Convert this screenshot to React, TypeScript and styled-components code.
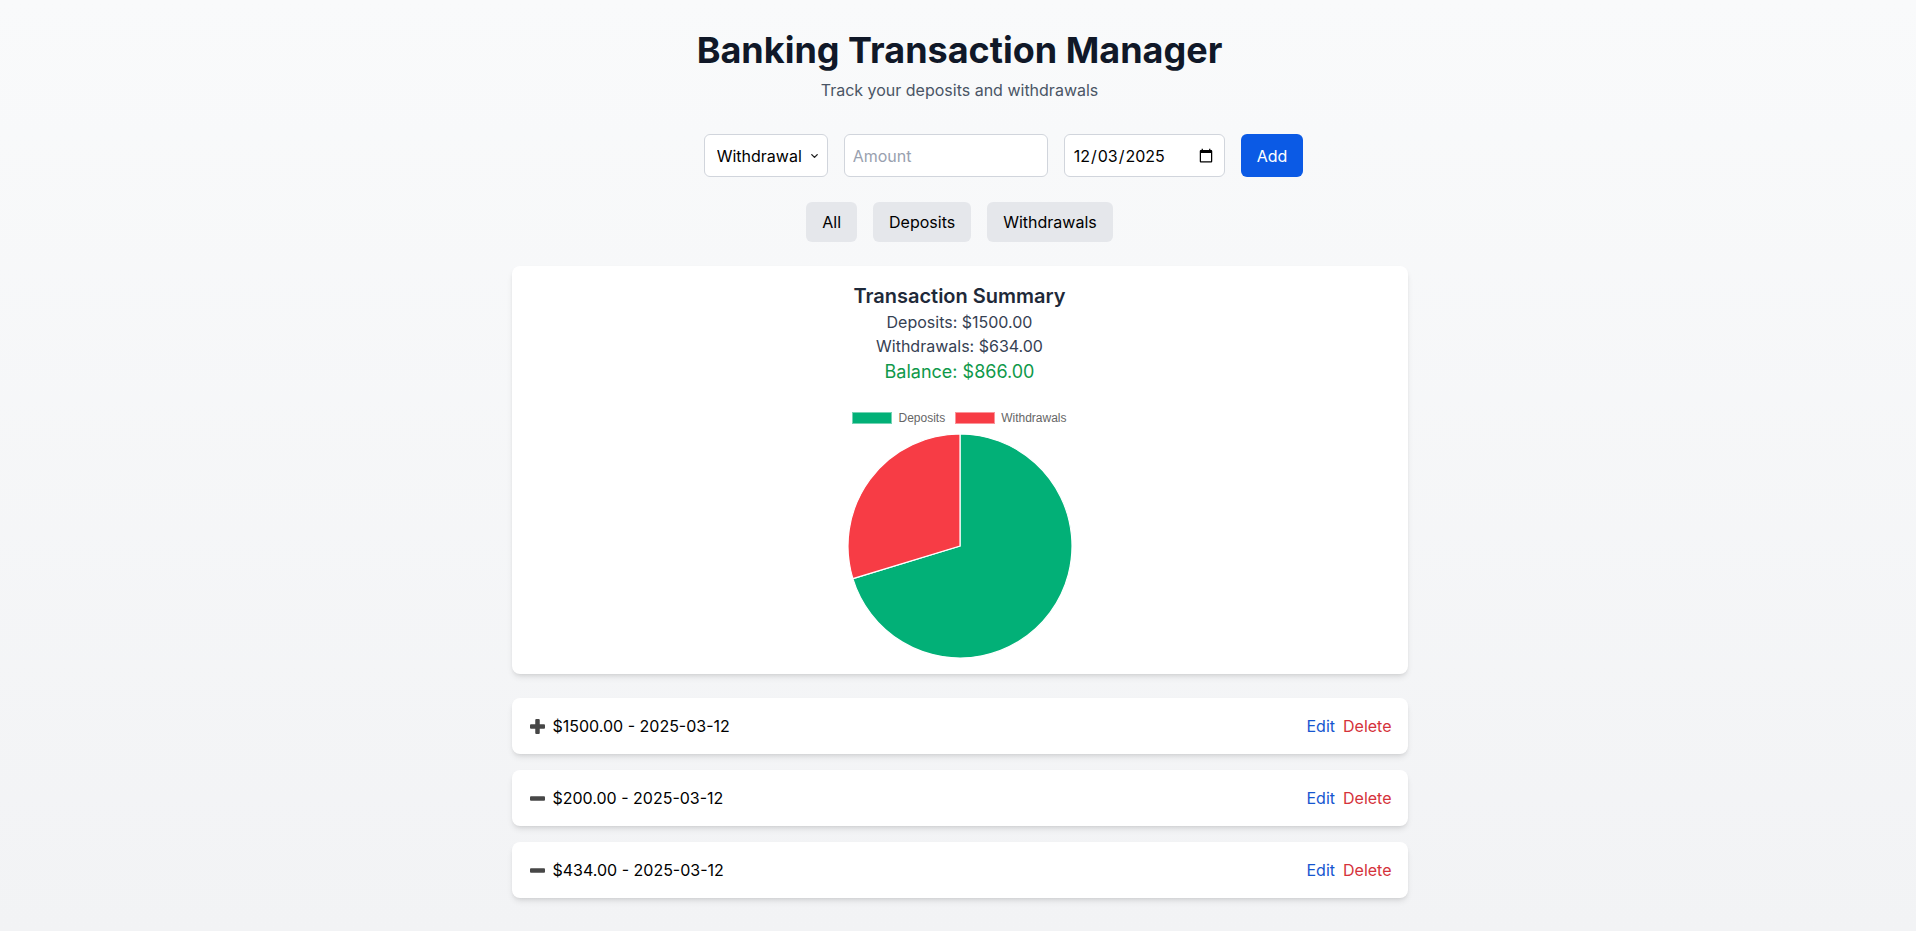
import React from "react";
import styled, { createGlobalStyle } from "styled-components";
import { ChevronDown } from "lucide-react";

const GlobalStyle = createGlobalStyle`
  html,
  body {
    margin: 0;
    padding: 0;
  }

  body {
    font-family: Inter, "Noto Sans", "Liberation Sans", sans-serif;
    color: #000;
  }

  * {
    box-sizing: border-box;
  }
`;

const Page = styled.div`
  min-height: 100vh;
  padding: 30px 16px 24px 19px;
  background: linear-gradient(to bottom, #f9fafb, #f2f3f5);
  display: flex;
  flex-direction: column;
  align-items: center;
`;

const Title = styled.h1`
  margin: 0;
  font-size: 36px;
  line-height: 40px;
  font-weight: 700;
  color: #101828;
`;

const Subtitle = styled.p`
  margin: 8px 0 0;
  font-size: 16px;
  line-height: 24px;
  color: #4a5565;
`;

const Form = styled.form`
  margin-top: 32px;
  display: flex;
  justify-content: center;
  gap: 16px;
  padding-left: 88px;
  height: 43px;
`;

const Field = styled.input<{ $width: number }>`
  width: ${(p) => p.$width}px;
  padding: 8px;
  border: 1px solid #d1d5dc;
  border-radius: 6px;
  background: #fff;
  font: inherit;
  font-size: 16px;
  color: #000;

  &::placeholder {
    color: #99a1af;
  }
`;

const SelectWrap = styled.div`
  position: relative;
  width: 124px;
  display: flex;
`;

const Select = styled.select`
  width: 100%;
  padding: 8px 24px 8px 12px;
  border: 1px solid #d1d5dc;
  border-radius: 6px;
  background: #fff;
  font: inherit;
  font-size: 16px;
  color: #000;
  appearance: none;
`;

const Caret = styled.span`
  position: absolute;
  right: 8px;
  top: 50%;
  transform: translateY(-50%);
  display: flex;
  pointer-events: none;
  color: #222;
`;

const Button = styled.button<{ $variant?: "primary" | "muted" }>`
  padding: 8px 16px;
  border: none;
  border-radius: 6px;
  font: inherit;
  font-size: 16px;
  line-height: 24px;
  cursor: pointer;
  background: ${(p) => (p.$variant === "primary" ? "#0b5ae5" : "#e5e7eb")};
  color: ${(p) => (p.$variant === "primary" ? "#fff" : "#000")};
`;

const Filters = styled.div`
  margin-top: 25px;
  display: flex;
  gap: 16px;
`;

const Card = styled.div`
  width: 896px;
  max-width: 100%;
  background: #fff;
  border-radius: 8px;
  box-shadow: 0 4px 6px -1px rgba(0, 0, 0, 0.1), 0 2px 4px -2px rgba(0, 0, 0, 0.1);
`;

const Summary = styled(Card)`
  margin-top: 24px;
  padding: 16px;
  display: flex;
  flex-direction: column;
  align-items: center;
  text-align: center;
`;

const SummaryTitle = styled.h2`
  margin: 0;
  font-size: 20px;
  line-height: 28px;
  font-weight: 600;
  color: #1e2939;
`;

const SummaryLine = styled.p`
  margin: 0;
  font-size: 16px;
  line-height: 24px;
  color: #364153;
`;

const Balance = styled.p`
  margin: 0;
  font-size: 18px;
  line-height: 28px;
  font-weight: 400;
  color: #0f994a;
`;

const Chart = styled.div`
  margin-top: 16px;
  height: 256px;
  display: flex;
  flex-direction: column;
  align-items: center;
`;

const Legend = styled.div`
  height: 32px;
  display: flex;
  align-items: center;
  gap: 10px;
  font-family: "Liberation Sans", Arial, sans-serif;
  font-size: 12px;
  color: #666;
`;

const LegendItem = styled.div`
  display: flex;
  align-items: center;
  gap: 6px;
`;

const LegendBox = styled.span<{ $color: string }>`
  width: 40px;
  height: 12px;
  background: ${(p) => p.$color};
  box-shadow: inset 0 0 0 1px rgba(255, 255, 255, 0.45);
`;

const List = styled.div`
  margin-top: 24px;
  width: 896px;
  max-width: 100%;
  display: flex;
  flex-direction: column;
  gap: 16px;
`;

const Row = styled(Card)`
  height: 56px;
  padding: 0 16px;
  display: flex;
  align-items: center;
  justify-content: space-between;
  font-size: 16px;
`;

const RowInfo = styled.div`
  display: flex;
  align-items: center;
  gap: 5px;
`;

const Sign = styled.span`
  width: 20px;
  display: inline-flex;
  justify-content: center;
`;

const Actions = styled.div`
  display: flex;
  gap: 8px;
`;

const LinkButton = styled.button<{ $danger?: boolean }>`
  padding: 0;
  border: none;
  background: none;
  font: inherit;
  font-size: 16px;
  cursor: pointer;
  color: ${(p) => (p.$danger ? "#d5323b" : "#1556d0")};
`;

const GREEN = "#02b077";
const RED = "#f73c45";

type Tx = { id: number; type: "deposit" | "withdrawal"; amount: number; date: string };

const transactions: Tx[] = [
  { id: 1, type: "deposit", amount: 1500, date: "2025-03-12" },
  { id: 2, type: "withdrawal", amount: 200, date: "2025-03-12" },
  { id: 3, type: "withdrawal", amount: 434, date: "2025-03-12" },
];

const SignIcon = ({ plus }: { plus: boolean }) => (
  <svg width="15" height="15" viewBox="0 0 15 15">
    <rect x="0" y="5.25" width="15" height="4.5" rx="1" fill="#474747" />
    {plus && <rect x="5.25" y="0" width="4.5" height="15" rx="1" fill="#474747" />}
  </svg>
);

const Pie = ({ deposits, withdrawals }: { deposits: number; withdrawals: number }) => {
  const r = 112;
  const angle = (deposits / (deposits + withdrawals)) * Math.PI * 2;
  const x = r * Math.sin(angle);
  const y = -r * Math.cos(angle);
  const large = angle > Math.PI ? 1 : 0;
  return (
    <svg width="224" height="224" viewBox="-112 -112 224 224">
      <path d={`M0 0 L0 ${-r} A${r} ${r} 0 ${large} 1 ${x} ${y} Z`} fill={GREEN} stroke="#fff" strokeWidth="1.2" />
      <path d={`M0 0 L${x} ${y} A${r} ${r} 0 ${1 - large} 1 0 ${-r} Z`} fill={RED} stroke="#fff" strokeWidth="1.2" />
    </svg>
  );
};

export default function App() {
  const deposits = transactions.filter((t) => t.type === "deposit").reduce((s, t) => s + t.amount, 0);
  const withdrawals = transactions.filter((t) => t.type === "withdrawal").reduce((s, t) => s + t.amount, 0);

  return (
    <>
      <GlobalStyle />
      <Page>
        <Title>Banking Transaction Manager</Title>
        <Subtitle>Track your deposits and withdrawals</Subtitle>

        <Form onSubmit={(e) => e.preventDefault()}>
          <SelectWrap>
            <Select defaultValue="withdrawal">
              <option value="deposit">Deposit</option>
              <option value="withdrawal">Withdrawal</option>
            </Select>
            <Caret>
              <ChevronDown size={11} strokeWidth={3} />
            </Caret>
          </SelectWrap>
          <Field $width={204} type="number" placeholder="Amount" />
          <Field $width={161} type="date" defaultValue="2025-12-03" />
          <Button $variant="primary" type="submit">Add</Button>
        </Form>

        <Filters>
          <Button>All</Button>
          <Button>Deposits</Button>
          <Button>Withdrawals</Button>
        </Filters>

        <Summary>
          <SummaryTitle>Transaction Summary</SummaryTitle>
          <SummaryLine>Deposits: ${deposits.toFixed(2)}</SummaryLine>
          <SummaryLine>Withdrawals: ${withdrawals.toFixed(2)}</SummaryLine>
          <Balance>Balance: ${(deposits - withdrawals).toFixed(2)}</Balance>
          <Chart>
            <Legend>
              <LegendItem>
                <LegendBox $color={GREEN} />
                Deposits
              </LegendItem>
              <LegendItem>
                <LegendBox $color={RED} />
                Withdrawals
              </LegendItem>
            </Legend>
            <Pie deposits={deposits} withdrawals={withdrawals} />
          </Chart>
        </Summary>

        <List>
          {transactions.map((t) => (
            <Row key={t.id}>
              <RowInfo>
                <Sign>
                  <SignIcon plus={t.type === "deposit"} />
                </Sign>
                ${t.amount.toFixed(2)} - {t.date}
              </RowInfo>
              <Actions>
                <LinkButton>Edit</LinkButton>
                <LinkButton $danger>Delete</LinkButton>
              </Actions>
            </Row>
          ))}
        </List>
      </Page>
    </>
  );
}
